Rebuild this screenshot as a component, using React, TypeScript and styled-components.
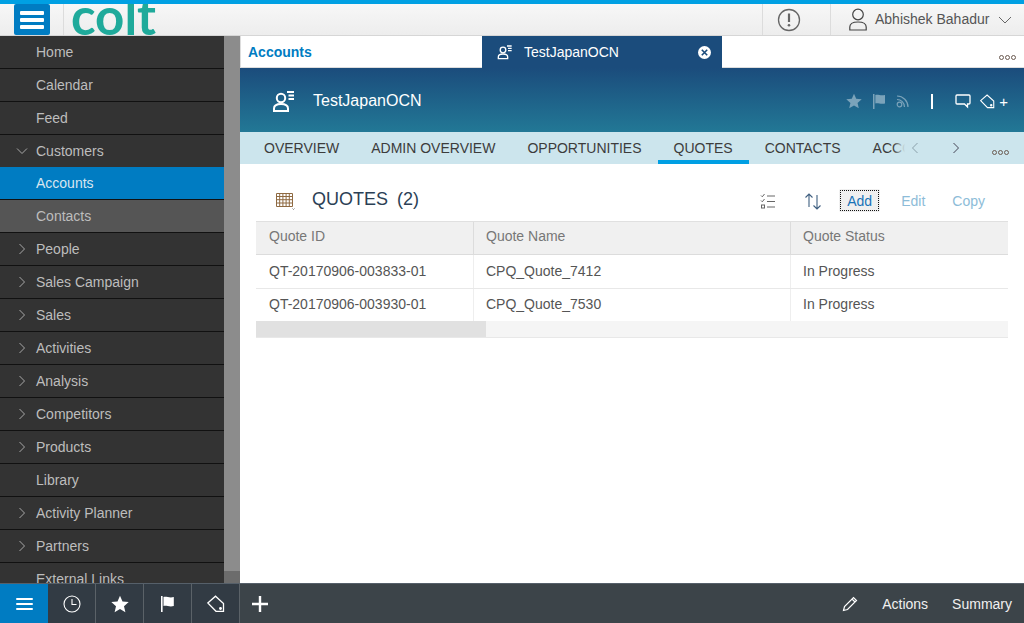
import React from "react";
import styled, { createGlobalStyle } from "styled-components";

const GlobalStyle = createGlobalStyle`
  html, body {
    margin: 0;
    padding: 0;
    height: 100%;
    overflow: hidden;
    background: #fff;
    font-family: "Liberation Sans", Arial, sans-serif;
    font-size: 14px;
  }
  #root { height: 100%; }
`;

const navItems = [
  { label: "Home" },
  { label: "Calendar" },
  { label: "Feed" },
  { label: "Customers", chevron: "down", open: true },
  { label: "Accounts", active: true },
  { label: "Contacts", sub: true },
  { label: "People", chevron: "right" },
  { label: "Sales Campaign", chevron: "right" },
  { label: "Sales", chevron: "right" },
  { label: "Activities", chevron: "right" },
  { label: "Analysis", chevron: "right" },
  { label: "Competitors", chevron: "right" },
  { label: "Products", chevron: "right" },
  { label: "Library" },
  { label: "Activity Planner", chevron: "right" },
  { label: "Partners", chevron: "right" },
  { label: "External Links" },
];

const tabs = ["OVERVIEW", "ADMIN OVERVIEW", "OPPORTUNITIES", "QUOTES", "CONTACTS", "ACCOUNTS"];

const quotes = [
  { id: "QT-20170906-003833-01", name: "CPQ_Quote_7412", status: "In Progress" },
  { id: "QT-20170906-003930-01", name: "CPQ_Quote_7530", status: "In Progress" },
];

const AccountIcon = ({ size = 24 }: { size?: number }) => (
  <svg width={size} height={size} viewBox="0 0 24 24" fill="none" stroke="currentColor" strokeWidth="2">
    <circle cx="9" cy="9" r="4.2" />
    <path d="M2 22v-2.500c0-3 2.500-4.500 7-4.500s7 1.500 7 4.500V22z" />
    <path d="M15 3h7M16.500 6.500h5.500M16.500 10h5.500" />
  </svg>
);

const TagIcon = ({ size = 18 }: { size?: number }) => (
  <svg width={size} height={size} viewBox="0 0 18 18" fill="none" stroke="currentColor" strokeWidth="1.300">
    <path d="M.8 8L8.500 1.200 16.500 8.500V16.300H9z" />
    <circle cx="13.500" cy="13.500" r="0.800" fill="currentColor" />
  </svg>
);

const FlagIcon = ({ size = 16 }: { size?: number }) => (
  <svg width={(size * 13) / 16} height={size} viewBox="0 0 13 16" fill="currentColor">
    <path d="M0 0h1.600v16H0z" />
    <path d="M2.500 1c3-.8 6 1.200 10.300 0v9c-4.300 1.200-7.300-.8-10.300 0z" />
  </svg>
);

const StarIcon = ({ size = 18 }: { size?: number }) => (
  <svg width={size} height={size} viewBox="0 0 18 18" fill="currentColor">
    <path d="M9 .8l2.500 5.700 6.200.6-4.700 4.100 1.400 6L9 14.100l-5.400 3.100 1.400-6L.3 7.100l6.200-.6z" />
  </svg>
);

const Hamburger = ({ width, bar, gap }: { width: number; bar: number; gap: number }) => (
  <BurgerStack $gap={gap}>
    <BurgerBar $width={width} $height={bar} />
    <BurgerBar $width={width} $height={bar} />
    <BurgerBar $width={width} $height={bar} />
  </BurgerStack>
);

const Chevron = ({ dir }: { dir: string }) => (
  <svg width="12" height="12" viewBox="0 0 12 12" fill="none" stroke="currentColor" strokeWidth="1">
    {dir === "down" ? <path d="M1 3.500l5 5 5-5" /> : <path d="M3.500 1l5 5-5 5" />}
  </svg>
);

const App = () => {
  return (
    <Page>
      <GlobalStyle />
      <TopLine />
      <Header>
        <MenuButton>
          <Hamburger width={24} bar={4} gap={3} />
        </MenuButton>
        <LogoDivider />
        <LogoBox>
          <Logo>colt</Logo>
        </LogoBox>
        <HeaderSpacer />
        <AlertCell>
          <svg width="24" height="24" viewBox="0 0 24 24" fill="none" stroke="#666" strokeWidth="1.300">
            <circle cx="12" cy="12" r="10.500" />
            <path d="M12 5.500v8.500" strokeWidth="2.200" />
            <circle cx="12" cy="17.300" r="1.300" fill="#666" stroke="none" />
          </svg>
        </AlertCell>
        <UserCell>
          <svg width="20" height="23" viewBox="0 0 20 23" fill="none" stroke="#444" strokeWidth="1.200">
            <circle cx="10" cy="6.500" r="5.300" />
            <path d="M1.800 22v-3c0-3 3-5 8.200-5s8.200 2 8.200 5v3z" />
          </svg>
          <UserName>Abhishek Bahadur</UserName>
          <svg width="14" height="8" viewBox="0 0 14 8" fill="none" stroke="#666" strokeWidth="1">
            <path d="M1 1l6 6 6-6" />
          </svg>
        </UserCell>
      </Header>

      <Body>
        <Sidebar>
          <NavList>
            {navItems.map((item) => (
              <NavRow key={item.label} $active={item.active} $sub={item.sub} $open={item.open}>
                <NavChevron>{item.chevron && <Chevron dir={item.chevron} />}</NavChevron>
                {item.label}
              </NavRow>
            ))}
          </NavList>
          <SideScroll>
            <SideThumb />
            <SideTrackEnd />
          </SideScroll>
        </Sidebar>

        <Main>
          <TabRow>
            <ListTab>Accounts</ListTab>
            <RecordTab>
              <AccountIcon size={16} />
              <RecordTabLabel>TestJapanOCN</RecordTabLabel>
              <CloseBadge>
                <svg width="7" height="7" viewBox="0 0 7 7" stroke="#1b4c7c" strokeWidth="1.600">
                  <path d="M.8.800l5.400 5.400M6.200.800L.8 6.200" />
                </svg>
              </CloseBadge>
            </RecordTab>
            <TabRowEnd>
              <Dots />
            </TabRowEnd>
          </TabRow>

          <RecordHeader>
            <AccountIcon size={24} />
            <RecordTitle>TestJapanOCN</RecordTitle>
            <RecordActions>
              <DimIcons>
                <StarIcon size={16} />
                <FlagIcon size={15} />
                <svg width="14" height="14" viewBox="0 0 14 14" fill="none" stroke="currentColor" strokeWidth="1.200">
                  <circle cx="3.500" cy="10.500" r="2.300" />
                  <path d="M1 5.500a7.500 7.500 0 0 1 7.500 7.500M1 2a11 11 0 0 1 11 11" />
                </svg>
              </DimIcons>
              <HeaderBar />
              <svg width="16" height="15" viewBox="0 0 16 15" fill="none" stroke="currentColor" strokeWidth="1.300">
                <path d="M2 1h12a1 1 0 0 1 1 1v7a1 1 0 0 1-1 1h-1.500v3l-3-3H2a1 1 0 0 1-1-1V2a1 1 0 0 1 1-1z" />
              </svg>
              <TagPlus>
                <TagIcon size={15} />
                <span>+</span>
              </TagPlus>
            </RecordActions>
          </RecordHeader>

          <TabStrip>
            <TabClip>
              {tabs.map((t) => (
                <StripTab key={t} $active={t === "QUOTES"}>
                  {t}
                </StripTab>
              ))}
              <ClipFade />
            </TabClip>
            <StripArrow $dim>
              <svg width="8" height="12" viewBox="0 0 8 12" fill="none" stroke="currentColor" strokeWidth="1">
                <path d="M6.500 1l-5 5 5 5" />
              </svg>
            </StripArrow>
            <StripArrow>
              <svg width="8" height="12" viewBox="0 0 8 12" fill="none" stroke="currentColor" strokeWidth="1">
                <path d="M1.500 1l5 5-5 5" />
              </svg>
            </StripArrow>
            <StripDots>
              <Dots />
            </StripDots>
          </TabStrip>

          <Content>
            <SectionHead>
              <GridIcon>
                <svg width="20" height="20" viewBox="0 0 20 20" fill="none" stroke="#8f6a42" strokeWidth="1">
                  <path d="M.5 3.500h16v13H.5zM.5 6.500h16M.5 9.700h16M.5 13h16M3.700 3.500v13M6.900 3.500v13M10.100 3.500v13M13.300 3.500v13" />
                  <path d="M16.500 18.500l1 1 1-1" stroke="#666" strokeWidth=".8" />
                </svg>
              </GridIcon>
              <SectionTitle>
                QUOTES<SectionCount>(2)</SectionCount>
              </SectionTitle>
              <SectionTools>
                <ToolIcon $gap={28}>
                  <svg width="16" height="16" viewBox="0 0 16 16" fill="none" stroke="#666" strokeWidth="1">
                    <path d="M1 2.500l1.300 1.300L4.500 1M7 3h8M1 7.500l1.300 1.300 2.200-2.800M7 8.500h8M7 14h8" />
                    <rect x="1.500" y="12" width="3" height="3" />
                  </svg>
                </ToolIcon>
                <ToolIcon $gap={17}>
                  <svg width="18" height="18" viewBox="0 0 18 18" fill="none" stroke="#3f5f80" strokeWidth="1.100">
                    <path d="M5 15V2M1.500 5.500L5 2l3.500 3.500M13 3v14M9.500 13.500L13 17l3.500-3.500" />
                  </svg>
                </ToolIcon>
                <AddButton>Add</AddButton>
                <GhostButton>Edit</GhostButton>
                <GhostButton>Copy</GhostButton>
              </SectionTools>
            </SectionHead>

            <Table>
              <HeadRow>
                <HeadCell $col={0}>Quote ID</HeadCell>
                <HeadCell $col={1}>Quote Name</HeadCell>
                <HeadCell $col={2}>Quote Status</HeadCell>
              </HeadRow>
              {quotes.map((q) => (
                <DataRow key={q.id}>
                  <DataCell $col={0}>{q.id}</DataCell>
                  <DataCell $col={1}>{q.name}</DataCell>
                  <DataCell $col={2}>{q.status}</DataCell>
                </DataRow>
              ))}
              <TableScroll>
                <TableThumb />
              </TableScroll>
            </Table>
          </Content>
        </Main>
      </Body>

      <Footer>
        <FooterCell $active>
          <Hamburger width={17} bar={2} gap={3} />
        </FooterCell>
        <FooterCell>
          <svg width="18" height="18" viewBox="0 0 18 18" fill="none" stroke="currentColor" strokeWidth="1.100">
            <circle cx="9" cy="9" r="8" />
            <path d="M9 4V9.500h4.500" />
          </svg>
        </FooterCell>
        <FooterCell>
          <StarIcon size={18} />
        </FooterCell>
        <FooterCell>
          <FlagIcon size={16} />
        </FooterCell>
        <FooterCell>
          <TagIcon size={18} />
        </FooterCell>
        <PlusCell>
          <svg width="16" height="16" viewBox="0 0 16 16" stroke="currentColor" strokeWidth="2.400">
            <path d="M8 0v16M0 8h16" />
          </svg>
        </PlusCell>
        <FooterSpacer />
        <svg width="16" height="16" viewBox="0 0 16 16" fill="none" stroke="#fff" strokeWidth="1.200">
          <path d="M1.500 14.500l1-4L11.500 1.500l3 3-9 9zM10 3l3 3" />
        </svg>
        <FooterAction $left={24}>Actions</FooterAction>
        <FooterAction $left={24}>Summary</FooterAction>
      </Footer>
    </Page>
  );
};

export default App;

const Dots = () => (
  <DotRow>
    <Dot />
    <Dot />
    <Dot />
  </DotRow>
);

const Page = styled.div`
  display: flex;
  flex-direction: column;
  width: 1024px;
  height: 623px;
  overflow: hidden;
`;

const TopLine = styled.div`
  height: 4px;
  flex: none;
  background: #00a0e3;
`;

const Header = styled.div`
  display: flex;
  align-items: stretch;
  flex: none;
  height: 32px;
  padding-left: 14px;
  box-sizing: border-box;
  background: linear-gradient(#f7f7f7, #ededed);
  border-bottom: 1px solid #d6d6d6;
`;

const MenuButton = styled.div`
  display: flex;
  align-items: center;
  justify-content: center;
  width: 36px;
  background: #007cc2;
  border-radius: 2px;
`;

const BurgerStack = styled.div<{ $gap: number }>`
  display: flex;
  flex-direction: column;
  gap: ${(p) => p.$gap}px;
`;

const BurgerBar = styled.div<{ $width: number; $height: number }>`
  width: ${(p) => p.$width}px;
  height: ${(p) => p.$height}px;
  background: #fff;
  border-radius: 1px;
`;

const LogoDivider = styled.div`
  width: 1px;
  margin-left: 13px;
  background: #dcdcdc;
`;

const LogoBox = styled.div`
  width: 100px;
  margin-left: 7px;
  overflow: hidden;
`;

const Logo = styled.div`
  margin-top: -4px;
  font-family: "Lato", "Open Sans", sans-serif;
  font-size: 51px;
  line-height: 31px;
  font-weight: 700;
  color: #1faa9b;
`;

const HeaderSpacer = styled.div`
  flex: 1;
`;

const AlertCell = styled.div`
  display: flex;
  align-items: center;
  width: 69px;
  box-sizing: border-box;
  padding-left: 14px;
  border-left: 1px solid #dcdcdc;
  border-right: 1px solid #dcdcdc;
`;

const UserCell = styled.div`
  display: flex;
  align-items: center;
  width: 193px;
  box-sizing: border-box;
  padding-left: 17px;
`;

const UserName = styled.span`
  margin: 0 9px 2px 7px;
  font-size: 14px;
  color: #555;
`;

const Body = styled.div`
  display: flex;
  flex: 1;
  min-height: 0;
`;

const Sidebar = styled.div`
  display: flex;
  width: 240px;
  flex: none;
`;

const NavList = styled.div`
  width: 224px;
  overflow: hidden;
  background: #333;
`;

const NavRow = styled.div<{ $active?: boolean; $sub?: boolean; $open?: boolean }>`
  display: flex;
  align-items: center;
  height: 32px;
  border-bottom: ${(p) => (p.$open ? "0" : "1px solid #111")};
  font-size: 14px;
  color: ${(p) => (p.$active ? "#d8e6f0" : "#bdbdbd")};
  background: ${(p) => (p.$active ? "#007cc2" : p.$sub ? "#555" : "#333")};
`;

const NavChevron = styled.span`
  display: flex;
  align-items: center;
  justify-content: center;
  width: 36px;
  padding-left: 8px;
  box-sizing: border-box;
  color: #a8a8a8;
`;

const SideScroll = styled.div`
  display: flex;
  flex-direction: column;
  width: 16px;
`;

const SideThumb = styled.div`
  flex: 1;
  background: #8c8c8c;
`;

const SideTrackEnd = styled.div`
  height: 12px;
  background: #6c6c6c;
`;

const Main = styled.div`
  display: flex;
  flex-direction: column;
  flex: 1;
  min-width: 0;
`;

const TabRow = styled.div`
  display: flex;
  flex: none;
  height: 32px;
  background: #fff;
`;

const ListTab = styled.div`
  display: flex;
  align-items: center;
  width: 242px;
  box-sizing: border-box;
  padding-left: 7px;
  font-weight: 700;
  font-size: 14px;
  color: #007cc2;
  border-left: 1px solid #ddd;
  border-bottom: 1px solid #ddd;
`;

const RecordTab = styled.div`
  display: flex;
  align-items: center;
  width: 240px;
  box-sizing: border-box;
  padding: 0 11px 0 15px;
  color: #fff;
  background: #1b4c7c;
`;

const RecordTabLabel = styled.span`
  flex: 1;
  margin-left: 11px;
  font-size: 14px;
`;

const CloseBadge = styled.span`
  display: flex;
  align-items: center;
  justify-content: center;
  width: 13px;
  height: 13px;
  border-radius: 50%;
  background: #fff;
`;

const TabRowEnd = styled.div`
  display: flex;
  flex: 1;
  align-items: flex-end;
  justify-content: flex-end;
  padding: 0 8px 7px 0;
  border-bottom: 1px solid #ddd;
`;

const DotRow = styled.div`
  display: flex;
  gap: 1px;
`;

const Dot = styled.span`
  width: 3px;
  height: 3px;
  border: 1px solid #6a5a50;
  border-radius: 50%;
`;

const RecordHeader = styled.div`
  display: flex;
  align-items: center;
  flex: none;
  height: 64px;
  padding: 2px 16px 0 32px;
  box-sizing: border-box;
  color: #fff;
  background: linear-gradient(#1b4c7c, #227896);
`;

const RecordTitle = styled.div`
  margin-left: 17px;
  font-size: 16px;
`;

const RecordActions = styled.div`
  display: flex;
  align-items: center;
  margin-left: auto;
`;

const DimIcons = styled.div`
  display: flex;
  align-items: center;
  gap: 11px;
  color: #7ba3ba;
`;

const HeaderBar = styled.div`
  width: 2px;
  height: 15px;
  margin: 0 22px 0 21px;
  background: #fff;
`;

const TagPlus = styled.div`
  display: flex;
  align-items: center;
  gap: 4px;
  margin-left: 9px;
  font-size: 15px;
`;

const TabStrip = styled.div`
  display: flex;
  flex: none;
  height: 32px;
  background: #cce5ed;
`;

const TabClip = styled.div`
  position: relative;
  display: flex;
  width: 665px;
  padding-left: 8px;
  box-sizing: border-box;
  overflow: hidden;
`;

const ClipFade = styled.div`
  position: absolute;
  top: 0;
  right: 0;
  width: 12px;
  height: 100%;
  background: linear-gradient(to right, rgba(204, 229, 237, 0), #cce5ed);
`;

const StripTab = styled.div<{ $active?: boolean }>`
  flex: none;
  height: 32px;
  padding: 0 16px;
  box-sizing: border-box;
  line-height: 32px;
  font-size: 14px;
  color: #3c3c3c;
  border-bottom: ${(p) => (p.$active ? "4px solid #009fe3" : "0")};
`;

const StripArrow = styled.div<{ $dim?: boolean }>`
  display: flex;
  align-items: center;
  justify-content: center;
  width: 20px;
  margin-right: 21px;
  color: ${(p) => (p.$dim ? "#8aa0aa" : "#445")};
`;

const StripDots = styled.div`
  display: flex;
  flex: 1;
  align-items: flex-end;
  justify-content: flex-end;
  padding: 0 15px 9px 0;
`;

const Content = styled.div`
  display: flex;
  flex-direction: column;
  flex: 1;
  padding: 0 16px;
  background: #fff;
`;

const SectionHead = styled.div`
  display: flex;
  align-items: center;
  height: 57px;
  padding-top: 14px;
  box-sizing: border-box;
`;

const GridIcon = styled.div`
  display: flex;
  width: 56px;
  padding-left: 20px;
  box-sizing: border-box;
`;

const SectionTitle = styled.div`
  font-size: 18px;
  color: #2b3f55;
`;

const SectionCount = styled.span`
  margin-left: 9px;
`;

const SectionTools = styled.div`
  display: flex;
  align-items: center;
  margin-left: auto;
  padding: 2px 9.5px 0 0;
`;

const ToolIcon = styled.div<{ $gap: number }>`
  display: flex;
  margin-right: ${(p) => p.$gap}px;
`;

const AddButton = styled.div`
  width: 41px;
  height: 23px;
  margin-right: 7.5px;
  line-height: 24px;
  text-align: center;
  font-size: 14px;
  color: #1a74b8;
  background: #f0f0f0;
  border-radius: 2px;
  outline: 1px dotted #111;
  outline-offset: -2px;
`;

const GhostButton = styled.div`
  padding: 0 13.5px;
  font-size: 14px;
  color: #8dbcd8;
`;

const Table = styled.div`
  display: flex;
  flex-direction: column;
  width: 752px;
`;

const columnWidths = [217, 317, 218];

const HeadRow = styled.div`
  display: flex;
  height: 34px;
  box-sizing: border-box;
  background: #f0f0f0;
  border-top: 1px solid #e0e0e0;
  border-bottom: 1px solid #dcdcdc;
`;

const HeadCell = styled.div<{ $col: number }>`
  width: ${(p) => columnWidths[p.$col]}px;
  padding-left: ${(p) => (p.$col ? 12 : 13)}px;
  box-sizing: border-box;
  line-height: 28px;
  font-size: 14px;
  color: #777;
  border-left: ${(p) => (p.$col ? "1px solid #dcdcdc" : "0")};
`;

const DataCell = styled.div<{ $col: number }>`
  width: ${(p) => columnWidths[p.$col]}px;
  padding-left: ${(p) => (p.$col ? 12 : 13)}px;
  box-sizing: border-box;
  line-height: 32px;
  font-size: 14px;
  color: #555;
  border-left: ${(p) => (p.$col ? "1px solid #eee" : "0")};
`;

const DataRow = styled.div`
  display: flex;
  height: 34px;
  box-sizing: border-box;
  border-bottom: 1px solid #e8e8e8;
  &:nth-child(3) {
    border-bottom: 0;
    height: 32px;
  }
  &:nth-child(3) ${DataCell} {
    line-height: 30px;
  }
`;

const TableScroll = styled.div`
  height: 17px;
  box-sizing: border-box;
  background: #f5f5f5;
  border-bottom: 1px solid #e8e8e8;
`;

const TableThumb = styled.div`
  width: 230px;
  height: 100%;
  background: #e1e1e1;
`;

const Footer = styled.div`
  display: flex;
  align-items: center;
  flex: none;
  height: 40px;
  padding-right: 12px;
  box-sizing: border-box;
  color: #fff;
  background: #3c4449;
  border-top: 1px solid #56606a;
`;

const FooterCell = styled.div<{ $active?: boolean }>`
  display: flex;
  align-items: center;
  justify-content: center;
  width: 48px;
  height: 100%;
  box-sizing: border-box;
  background: ${(p) => (p.$active ? "#007cc2" : "#323b44")};
  border-right: ${(p) => (p.$active ? "0" : "1px solid #5b6268")};
`;

const PlusCell = styled.div`
  display: flex;
  align-items: center;
  justify-content: center;
  width: 40px;
`;

const FooterSpacer = styled.div`
  flex: 1;
`;

const FooterAction = styled.div<{ $left: number }>`
  margin-left: ${(p) => p.$left}px;
  font-size: 14px;
  color: #f0f0f0;
`;
